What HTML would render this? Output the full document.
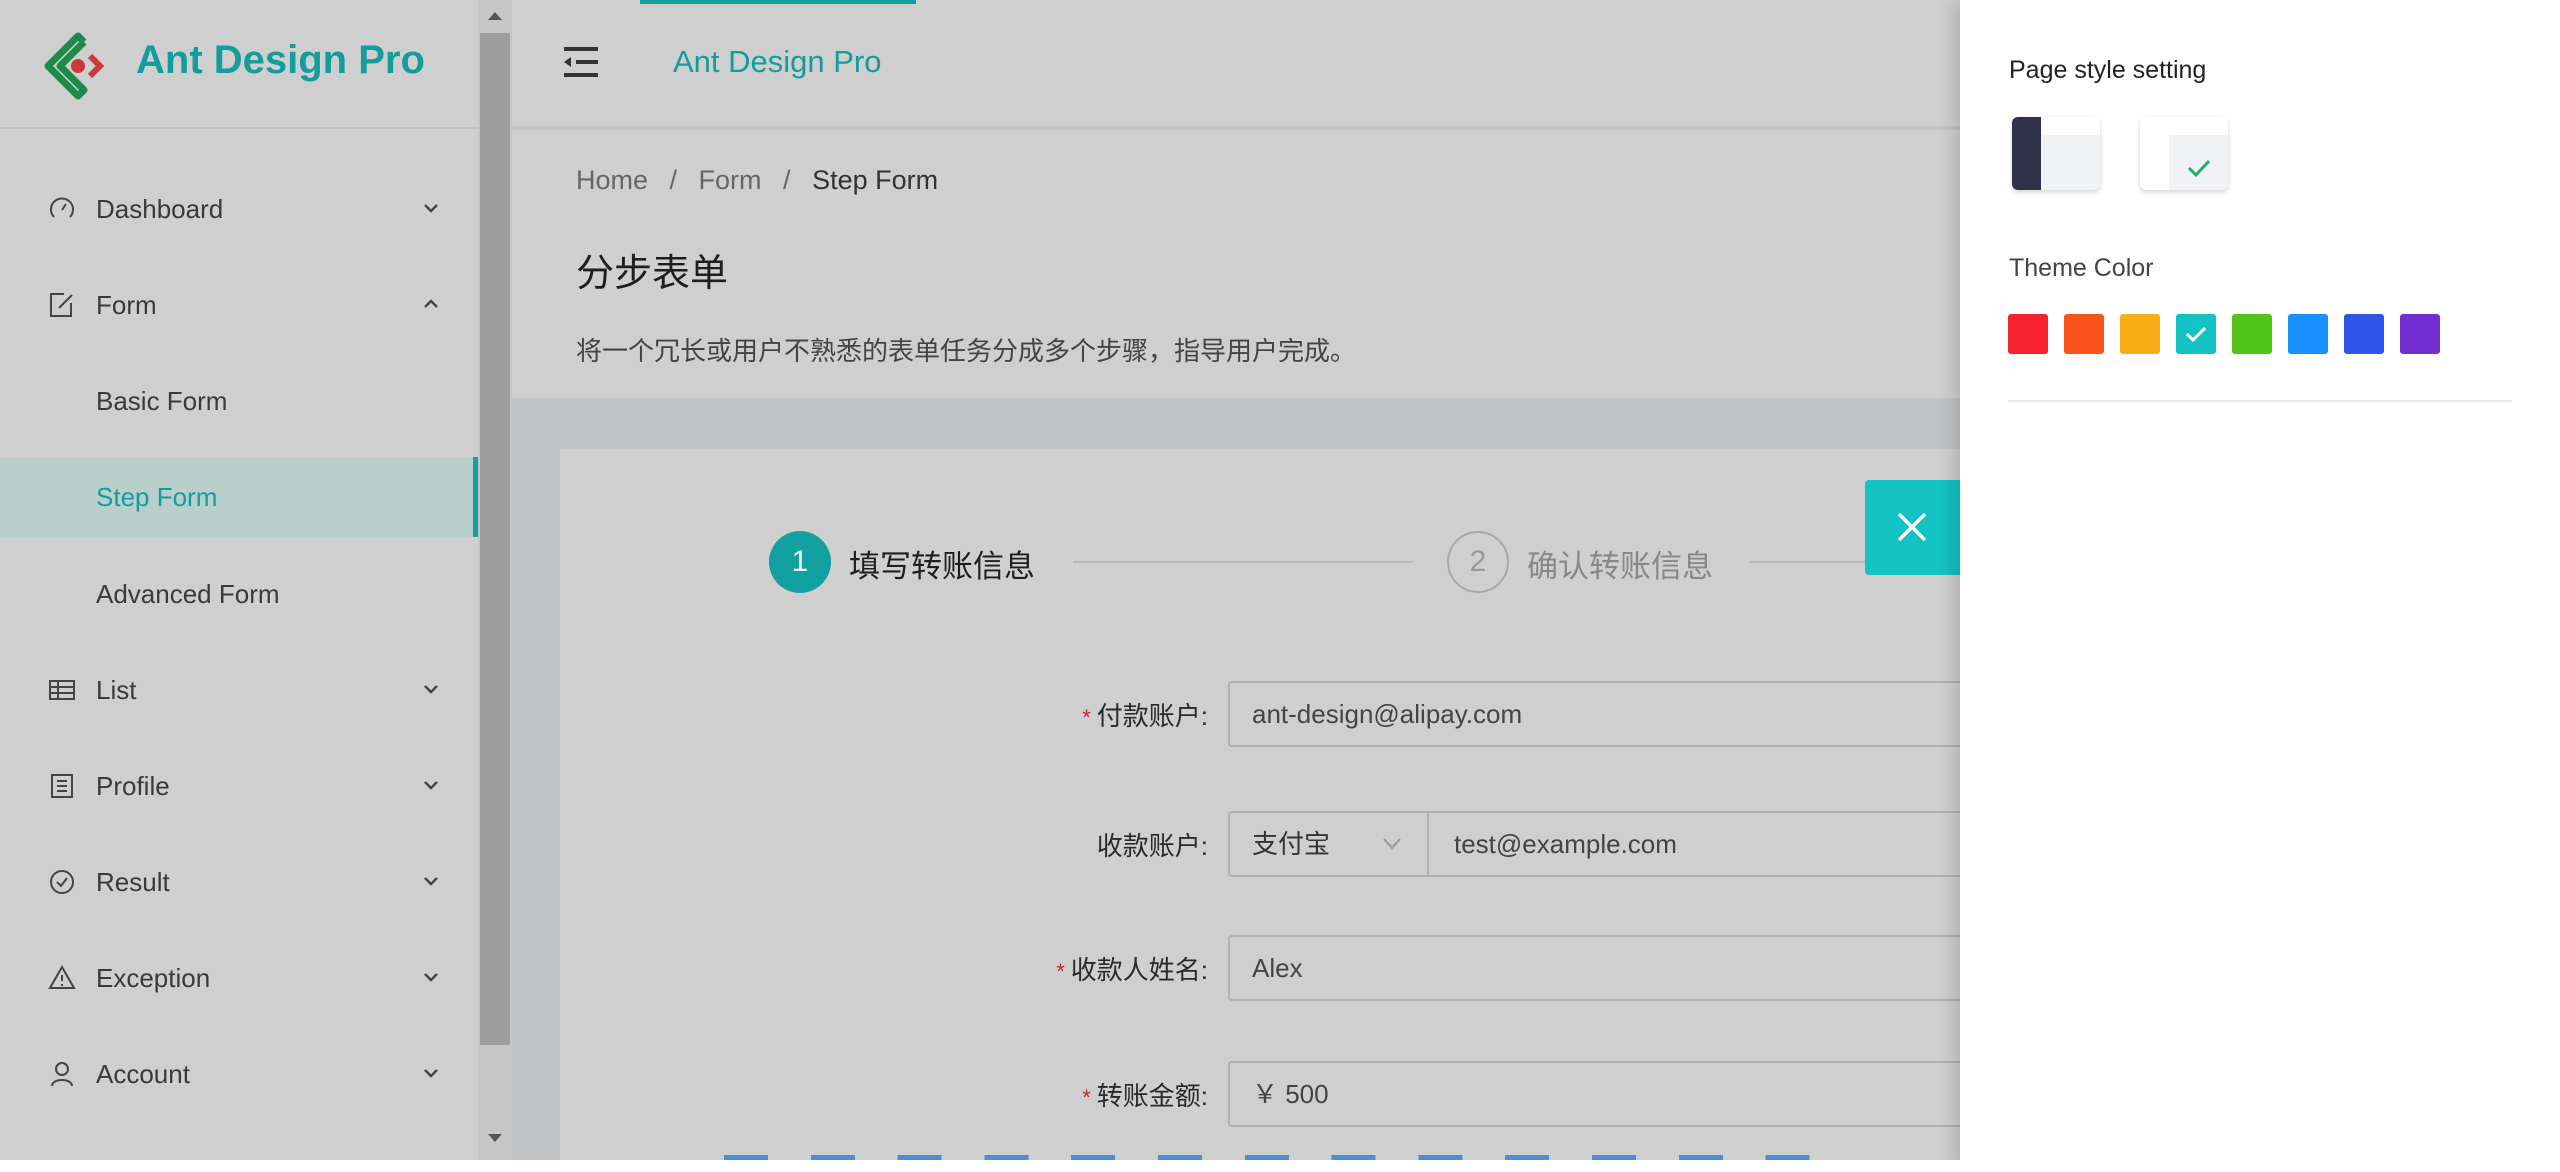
<!DOCTYPE html>
<html><head><meta charset="utf-8"><style>
*{margin:0;padding:0;box-sizing:border-box}
body{width:2560px;height:1172px;overflow:hidden;background:#c2c3c6;font-family:"Liberation Sans","Noto Sans CJK SC",sans-serif;position:relative;color:#333}
.a{position:absolute}
.side{left:0;top:0;width:478px;height:1172px;background:#cfcfcf}
.mi{position:absolute;left:0;width:478px;height:96px;line-height:96px;font-size:26px;color:#3a3a3a}
.mi .t{position:absolute;left:96px}
.mi svg.ic{position:absolute;left:48px;top:34px}
.mi svg.ch{position:absolute;left:422px;top:40px}
.lbl{position:absolute;font-size:26px;color:#2a2a2a;text-align:right;width:400px;left:808px}
.lbl b{color:#c02828;font-weight:normal;margin-right:6px;font-size:22px}
.inp{position:absolute;left:1228px;width:800px;height:66px;border:2px solid #b0b0b0;border-radius:4px;font-size:26px;color:#444;line-height:62px;padding-left:22px}
.sw{position:absolute;top:314px;width:40px;height:40px;border-radius:3px}
</style></head><body>
<div class="a side">
 <svg class="a" style="left:44px;top:32px" width="70" height="68" viewBox="0 0 70 68"><path d="M40 10 L34 4 L4 34 L34 64 L40 58 L16 34 L40 10" fill="none" stroke="#1e8a4a" stroke-width="7" stroke-linejoin="round"/><path d="M46 24 L56 34 L46 44" fill="none" stroke="#c93a3a" stroke-width="6"/><circle cx="34" cy="34" r="7" fill="#c93a3a"/></svg>
 <div class="a" style="left:136px;top:38px;font-size:40px;font-weight:bold;color:#139d9d">Ant Design Pro</div>
 <div class="a" style="left:0;top:127px;width:478px;height:2px;background:#c2c2c2"></div>
 <div class="mi" style="top:161px"><svg class="ic" width="28" height="28" viewBox="0 0 28 28" fill="none" stroke="#444" stroke-width="2"><path d="M6 22 A11 11 0 1 1 22 22"/><path d="M14 15 L18 9"/></svg><span class="t">Dashboard</span><svg class="ch" width="18" height="14"><path d="M3 4 L9 10 L15 4" fill="none" stroke="#444" stroke-width="2.4"/></svg></div>
 <div class="mi" style="top:257px"><svg class="ic" width="28" height="28" viewBox="0 0 28 28" fill="none" stroke="#444" stroke-width="2"><path d="M16 3 H3 V25 H23 V12"/><path d="M11 17 L24 4"/></svg><span class="t">Form</span><svg class="ch" width="18" height="14"><path d="M3 10 L9 4 L15 10" fill="none" stroke="#444" stroke-width="2.4"/></svg></div>
 <div class="mi" style="top:353px"><span class="t">Basic Form</span></div>
 <div class="mi" style="top:457px;height:80px;line-height:80px;background:#b8cfcc;color:#139d9d"><span class="t">Step Form</span><div class="a" style="right:0;top:0;width:5px;height:80px;background:#13a0a0"></div></div>
 <div class="mi" style="top:546px"><span class="t">Advanced Form</span></div>
 <div class="mi" style="top:642px"><svg class="ic" width="28" height="28" viewBox="0 0 28 28" fill="none" stroke="#444" stroke-width="2"><rect x="2" y="5" width="24" height="18"/><path d="M2 11 H26 M2 17 H26 M10 5 V23"/></svg><span class="t">List</span><svg class="ch" width="18" height="14"><path d="M3 4 L9 10 L15 4" fill="none" stroke="#444" stroke-width="2.4"/></svg></div>
 <div class="mi" style="top:738px"><svg class="ic" width="28" height="28" viewBox="0 0 28 28" fill="none" stroke="#444" stroke-width="2"><rect x="4" y="3" width="20" height="22"/><path d="M9 9 H19 M9 14 H19 M9 19 H19"/></svg><span class="t">Profile</span><svg class="ch" width="18" height="14"><path d="M3 4 L9 10 L15 4" fill="none" stroke="#444" stroke-width="2.4"/></svg></div>
 <div class="mi" style="top:834px"><svg class="ic" width="28" height="28" viewBox="0 0 28 28" fill="none" stroke="#444" stroke-width="2"><circle cx="14" cy="14" r="11"/><path d="M9 14 L13 18 L19 10"/></svg><span class="t">Result</span><svg class="ch" width="18" height="14"><path d="M3 4 L9 10 L15 4" fill="none" stroke="#444" stroke-width="2.4"/></svg></div>
 <div class="mi" style="top:930px"><svg class="ic" width="28" height="28" viewBox="0 0 28 28" fill="none" stroke="#444" stroke-width="2"><path d="M14 3 L26 24 H2 Z"/><path d="M14 11 V17 M14 20 V22"/></svg><span class="t">Exception</span><svg class="ch" width="18" height="14"><path d="M3 4 L9 10 L15 4" fill="none" stroke="#444" stroke-width="2.4"/></svg></div>
 <div class="mi" style="top:1026px"><svg class="ic" width="28" height="28" viewBox="0 0 28 28" fill="none" stroke="#444" stroke-width="2"><circle cx="14" cy="9" r="6"/><path d="M4 26 C4 18 24 18 24 26"/></svg><span class="t">Account</span><svg class="ch" width="18" height="14"><path d="M3 4 L9 10 L15 4" fill="none" stroke="#444" stroke-width="2.4"/></svg></div>
</div>
<div class="a" style="left:478px;top:0;width:34px;height:1172px;background:#c6c6c6"></div>
<div class="a" style="left:480px;top:33px;width:30px;height:1012px;background:#9e9e9e"></div>
<svg class="a" style="left:486px;top:10px" width="18" height="12"><path d="M2 10 L9 2 L16 10Z" fill="#555"/></svg>
<svg class="a" style="left:486px;top:1132px" width="18" height="12"><path d="M2 2 L9 10 L16 2Z" fill="#555"/></svg>
<!-- header -->
<div class="a" style="left:512px;top:0;width:1448px;height:128px;background:#cfcfcf;border-bottom:2px solid #c4c4c4"></div>
<div class="a" style="left:640px;top:0;width:276px;height:4px;background:#12a0a0"></div>
<svg class="a" style="left:562px;top:46px" width="38" height="32"><path d="M2 3 H36 M14 16 H36 M2 29 H36" stroke="#333" stroke-width="4"/><path d="M2 16 L9 11 V21Z" fill="#333"/></svg>
<div class="a" style="left:673px;top:44px;font-size:31px;color:#139d9d">Ant Design Pro</div>
<!-- page header -->
<div class="a" style="left:512px;top:130px;width:1448px;height:268px;background:#cfcfcf"></div>
<div class="a" style="left:576px;top:165px;font-size:27px;color:#666">Home <span style="margin:0 14px">/</span> Form <span style="margin:0 14px">/</span> <span style="color:#333">Step Form</span></div>
<div class="a" style="left:576px;top:242px;font-size:38px;color:#1e1e1e">分步表单</div>
<div class="a" style="left:576px;top:331px;font-size:26px;color:#444">将一个冗长或用户不熟悉的表单任务分成多个步骤，指导用户完成。</div>
<!-- card -->
<div class="a" style="left:560px;top:449px;width:1400px;height:723px;background:#cfcfcf"></div>
<div class="a" style="left:769px;top:531px;width:62px;height:62px;border-radius:50%;background:#12a0a0;color:#e8f6f6;font-size:30px;text-align:center;line-height:62px">1</div>
<div class="a" style="left:849px;top:541px;font-size:31px;color:#1e1e1e">填写转账信息</div>
<div class="a" style="left:1073px;top:561px;width:341px;height:2px;background:#b8b8b8"></div>
<div class="a" style="left:1447px;top:531px;width:62px;height:62px;border-radius:50%;border:2px solid #a8a8a8;color:#999;font-size:30px;text-align:center;line-height:58px">2</div>
<div class="a" style="left:1527px;top:541px;font-size:31px;color:#888">确认转账信息</div>
<div class="a" style="left:1750px;top:561px;width:115px;height:2px;background:#b8b8b8"></div>
<div class="lbl" style="top:696px"><b>*</b>付款账户:</div>
<div class="inp" style="top:681px">ant-design@alipay.com</div>
<div class="lbl" style="top:826px">收款账户:</div>
<div class="inp" style="top:811px;padding-left:224px">test@example.com</div>
<div class="a" style="left:1228px;top:811px;width:201px;height:66px;border:2px solid #b0b0b0;border-radius:4px 0 0 4px;background:#cfcfcf;font-size:26px;color:#333;line-height:62px;padding-left:22px">支付宝<svg class="a" style="left:152px;top:24px" width="20" height="14"><path d="M2 2 L10 11 L18 2" fill="none" stroke="#999" stroke-width="2"/></svg></div>
<div class="lbl" style="top:950px"><b>*</b>收款人姓名:</div>
<div class="inp" style="top:935px">Alex</div>
<div class="lbl" style="top:1076px"><b>*</b>转账金额:</div>
<div class="inp" style="top:1061px">￥ 500</div>
<div class="a" style="left:724px;top:1155px;width:1100px;height:6px;background:repeating-linear-gradient(90deg,#4a8fd6 0 44px,transparent 44px 86.8px)"></div>
<!-- close btn -->
<div class="a" style="left:1865px;top:480px;width:95px;height:95px;background:#13c2c2;border-radius:4px 0 0 4px"><svg class="a" style="left:31px;top:31px" width="32" height="32"><path d="M3 3 L29 29 M29 3 L3 29" stroke="#fff" stroke-width="3.5"/></svg></div>
<!-- drawer -->
<div class="a" style="left:1960px;top:0;width:600px;height:1172px;background:#fff;box-shadow:-6px 0 16px rgba(0,0,0,.15)"></div>
<div class="a" style="left:2009px;top:56px;font-size:25px;color:#222">Page style setting</div>
<div class="a" style="left:2012px;top:117px;width:88px;height:73px;border-radius:6px;background:#f0f2f5;overflow:hidden;box-shadow:0 2px 5px rgba(0,0,0,.18)"><div class="a" style="left:0;top:0;width:29px;height:73px;background:#30324a"></div><div class="a" style="left:29px;top:0;width:59px;height:18px;background:#fff"></div></div>
<div class="a" style="left:2140px;top:117px;width:88px;height:73px;border-radius:6px;background:#fff;overflow:hidden;box-shadow:0 2px 5px rgba(0,0,0,.18)"><div class="a" style="left:29px;top:18px;width:59px;height:55px;background:#f0f2f5"></div><svg class="a" style="left:46px;top:40px" width="26" height="22"><path d="M3 11 L10 18 L23 4" fill="none" stroke="#1fb06a" stroke-width="3"/></svg></div>
<div class="a" style="left:2009px;top:254px;font-size:25px;color:#444">Theme Color</div>
<div class="sw" style="left:2008px;background:#f5222d"></div>
<div class="sw" style="left:2064px;background:#fa541c"></div>
<div class="sw" style="left:2120px;background:#faad14"></div>
<div class="sw" style="left:2176px;background:#13c2c2"><svg class="a" style="left:9px;top:11px" width="22" height="18"><path d="M2 9 L8 15 L20 3" fill="none" stroke="#fff" stroke-width="3"/></svg></div>
<div class="sw" style="left:2232px;background:#52c41a"></div>
<div class="sw" style="left:2288px;background:#1890ff"></div>
<div class="sw" style="left:2344px;background:#2f54eb"></div>
<div class="sw" style="left:2400px;background:#722ed1"></div>
<div class="a" style="left:2008px;top:400px;width:504px;height:2px;background:#e8e8e8"></div>
<div class="a" style="left:0;top:1160px;width:2560px;height:12px;background:#fff"></div>
</body></html>
